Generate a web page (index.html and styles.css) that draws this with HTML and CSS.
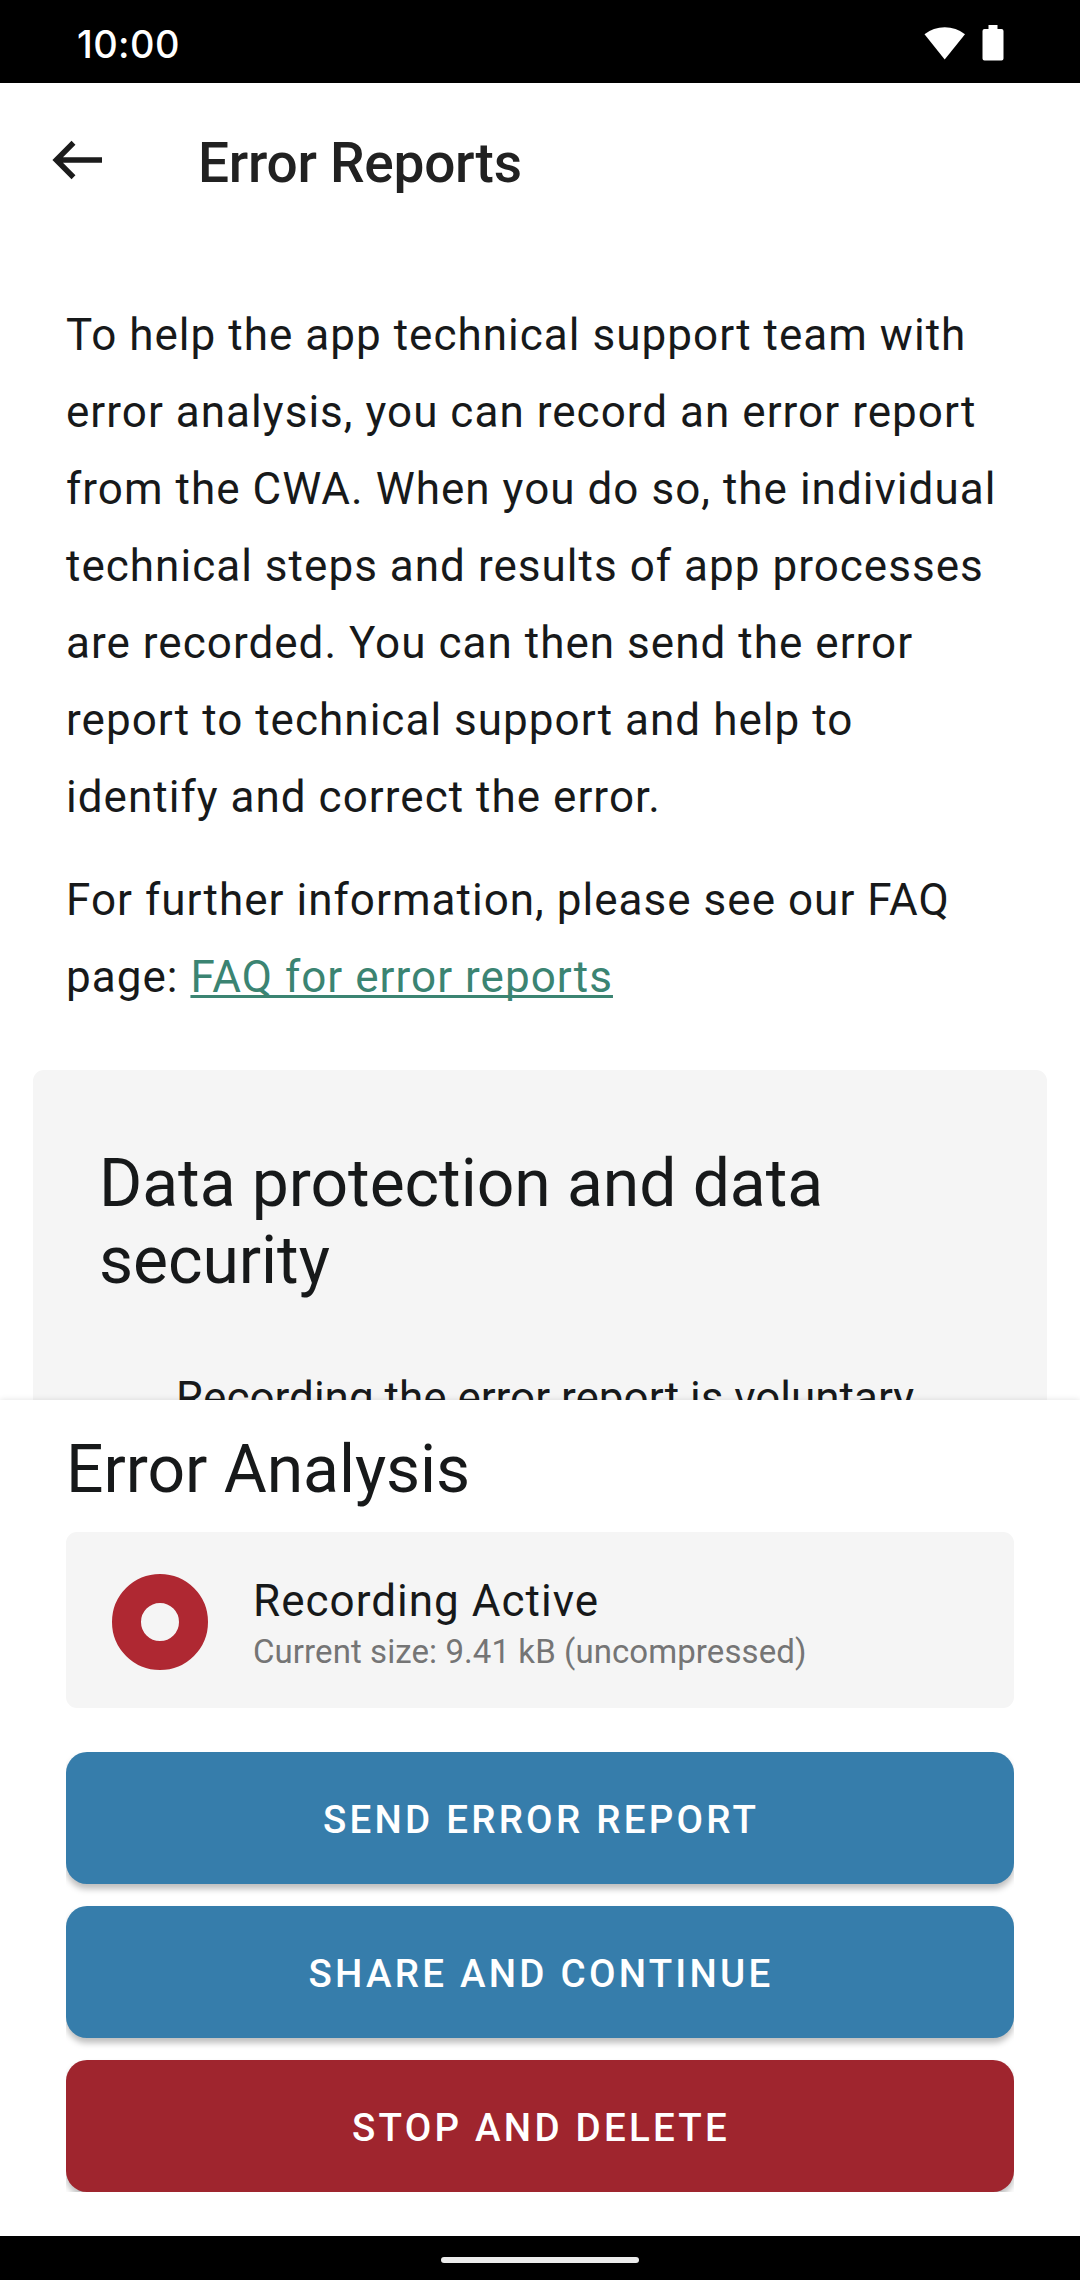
FILE: index.html
```html
<!DOCTYPE html>
<html lang="en">
<head>
  <meta charset="utf-8">
  <title>Error Reports</title>
  <link rel="stylesheet" href="styles.css">
</head>
<body>
  <div class="screen">
    <header class="status-bar">
      <span class="clock">10:00</span>
      <div class="status-icons">
        <svg class="wifi-icon" width="42" height="36" viewBox="0 0 42 36"><path d="M0.5 9.3A33 33 0 0 1 41 9.3L20.7 34.5Z" fill="#fff"/></svg>
        <svg class="battery-icon" width="22" height="36" viewBox="0 0 22 36"><path d="M6.5 0h9v4H19.500a2 2 0 0 1 2 2V33.500a2 2 0 0 1-2 2H2.500a2 2 0 0 1-2-2V6a2 2 0 0 1 2-2H6.500Z" fill="#fff"/></svg>
      </div>
    </header>

    <div class="toolbar">
      <svg class="back-icon" width="50" height="40" viewBox="0 0 50 40"><path d="M21.500 2.700L4.300 20L21.500 37.300M4.300 20H50" fill="none" stroke="#1b1b1b" stroke-width="5.500"/></svg>
      <h1 class="toolbar-title">Error Reports</h1>
    </div>

    <main class="content">
      <p class="body-text">To help the app technical support team with error analysis, you can record an error report from the CWA. When you do so, the individual technical steps and results of app processes are recorded. You can then send the error report to technical support and help to identify and correct the error.</p>
      <p class="body-text faq">For further information, please see our FAQ page: <a class="link" href="#">FAQ for error reports</a></p>
      <section class="privacy-card">
        <h2 class="headline">Data protection and data security</h2>
        <p class="body-text privacy-item">Recording the error report is voluntary</p>
      </section>
    </main>

    <section class="sheet">
      <h2 class="headline">Error Analysis</h2>
      <div class="record-card">
        <svg class="record-icon" width="96" height="96" viewBox="0 0 96 96"><circle cx="48" cy="48" r="33.500" fill="none" stroke="#af2832" stroke-width="29"/></svg>
        <div class="record-text">
          <div class="record-state">Recording Active</div>
          <div class="record-size">Current size: 9.41 kB (uncompressed)</div>
        </div>
      </div>
      <div class="actions">
        <button class="button">SEND ERROR REPORT</button>
        <button class="button">SHARE AND CONTINUE</button>
        <button class="button button-danger">STOP AND DELETE</button>
      </div>
    </section>

    <footer class="nav-bar"><div class="nav-handle"></div></footer>
  </div>
</body>
</html>
```

FILE: styles.css
```css
* {
  box-sizing: border-box;
}

body,
h1,
h2,
p {
  margin: 0;
}

body {
  background: #fff;
  color: #17191a;
  font-family: Roboto, "Liberation Sans", sans-serif;
}

.screen {
  display: flex;
  flex-direction: column;
  width: 1080px;
  height: 2280px;
  overflow: hidden;
}

.status-bar {
  display: flex;
  flex: none;
  justify-content: space-between;
  height: 83px;
  padding: 0 76px 0 77px;
  background: #000;
  color: #fff;
}

.clock {
  padding-top: 22px;
  font: 500 38px/45px Inter, sans-serif;
  letter-spacing: 0.4px;
}

.status-icons {
  display: flex;
  gap: 16px;
  padding-top: 25px;
}

.toolbar {
  display: flex;
  flex: none;
  align-items: center;
  gap: 96px;
  height: 154px;
  padding-left: 52px;
}

.toolbar-title {
  padding-top: 5px;
  color: #212121;
  font-size: 55px;
  font-weight: 500;
  line-height: 64px;
  letter-spacing: -0.27px;
}

.content {
  flex: 1;
  min-height: 0;
  padding: 60px 33px 0;
  overflow: hidden;
}

.body-text {
  padding: 0 46px 0 33px;
  font-size: 44px;
  line-height: 77px;
  letter-spacing: 1.03px;
}

.faq {
  margin-top: 26px;
}

.link {
  color: #3b8472;
  text-decoration: underline;
  text-decoration-skip-ink: none;
  text-decoration-thickness: 3px;
  text-underline-offset: 3px;
}

.privacy-card {
  height: 600px;
  margin-top: 54px;
  padding: 75px 66px 0;
  border-radius: 11px;
  background: #f5f5f5;
}

.headline {
  font-size: 66px;
  font-weight: 400;
  line-height: 77px;
  letter-spacing: -0.05px;
}

.privacy-item {
  margin-top: 61px;
  padding: 0 0 0 77px;
  letter-spacing: 0;
  white-space: nowrap;
}

.sheet {
  z-index: 1;
  flex: none;
  height: 836px;
  padding: 31px 66px 0;
  background: #fff;
  box-shadow: 0 0 6px rgba(0, 0, 0, 0.12);
}

.record-card {
  display: flex;
  align-items: center;
  gap: 45px;
  height: 176px;
  margin-top: 24px;
  padding: 4px 46px 0;
  border-radius: 11px;
  background: #f5f5f5;
}

.record-text {
  padding-top: 7px;
}

.record-state {
  font-size: 44px;
  line-height: 52px;
  letter-spacing: 1.03px;
}

.record-size {
  color: #757575;
  font-size: 33px;
  line-height: 49px;
  letter-spacing: 0.08px;
}

.actions {
  display: grid;
  grid-auto-rows: 132px;
  gap: 22px;
  margin-top: 44px;
  overflow: hidden;
}

.button {
  padding: 3px 0 0 2px;
  border: 0;
  border-radius: 21px;
  background: #367dab;
  box-shadow: 0 5px 6px rgba(0, 0, 0, 0.26);
  color: #fff;
  font: 500 38.500px/45px Roboto, sans-serif;
  letter-spacing: 3.240px;
}

.button-danger {
  background: #9f252e;
}

.nav-bar {
  z-index: 1;
  display: flex;
  flex: none;
  justify-content: center;
  height: 44px;
  padding-top: 21px;
  background: #000;
}

.nav-handle {
  width: 198px;
  height: 6px;
  border-radius: 3px;
  background: #ebebeb;
}
```
